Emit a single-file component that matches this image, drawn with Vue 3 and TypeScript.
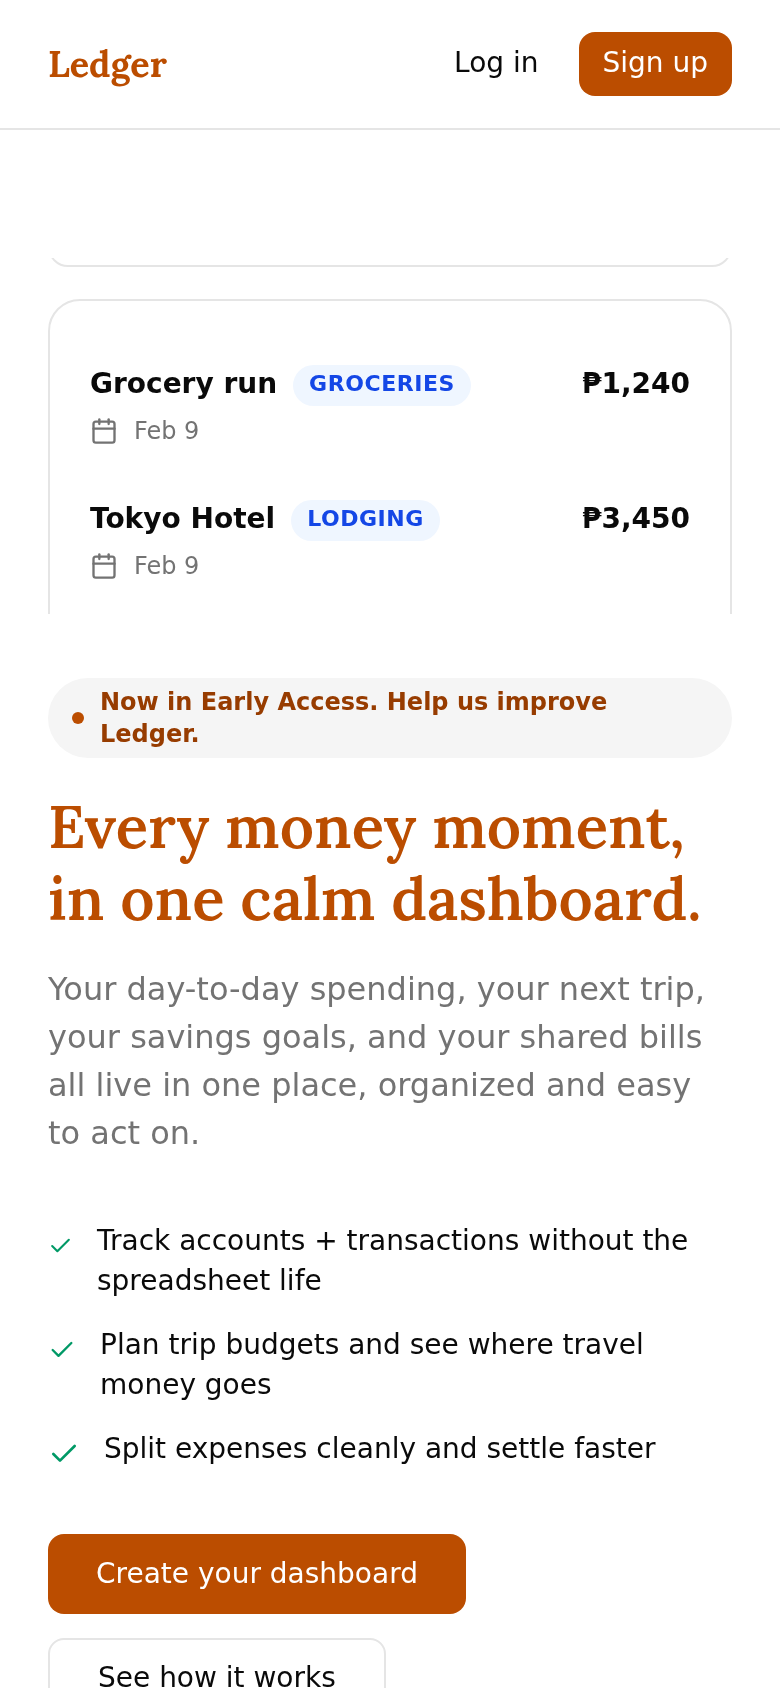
<script setup lang="ts">
type Expense = { title: string; tag: string; amount: string; date: string };

const expenses: Expense[] = [
  { title: "Grocery run", tag: "GROCERIES", amount: "₱1,240", date: "Feb 9" },
  { title: "Tokyo Hotel", tag: "LODGING", amount: "₱3,450", date: "Feb 9" },
];

const perks: { text: string; width: number }[] = [
  { text: "Track accounts + transactions without the spreadsheet life", width: 25 },
  { text: "Plan trip budgets and see where travel money goes", width: 28 },
  { text: "Split expenses cleanly and settle faster", width: 32 },
];
</script>

<template>
  <div class="page">
    <header class="topbar">
      <span class="logo">Ledger</span>
      <nav class="actions">
        <a class="login">Log in</a>
        <a class="signup">Sign up</a>
      </nav>
    </header>

    <section class="preview">
      <div class="card-tail"><div class="card-end" /></div>
      <div class="card">
        <div v-for="item in expenses" :key="item.title" class="expense">
          <div class="expense-top">
            <span class="expense-title">{{ item.title }}</span>
            <span class="tag">{{ item.tag }}</span>
            <span class="amount">{{ item.amount }}</span>
          </div>
          <div class="expense-date">
            <svg width="28" height="28" viewBox="0 0 24 24" fill="none" stroke="currentColor" stroke-width="2" stroke-linecap="round" stroke-linejoin="round">
              <path d="M8 2v4" />
              <path d="M16 2v4" />
              <rect x="3" y="4" width="18" height="18" rx="2" />
              <path d="M3 10h18" />
            </svg>
            <span>{{ item.date }}</span>
          </div>
        </div>
      </div>
    </section>

    <main class="hero">
      <div class="notice">
        <span class="notice-dot" />
        <span>Now in Early Access. Help us improve Ledger.</span>
      </div>
      <h1>Every money moment,<br />in one calm dashboard.</h1>
      <p class="lead">
        Your day-to-day spending, your next trip, your savings goals, and your shared bills all live in one place, organized and easy to act on.
      </p>
      <ul class="perks">
        <li v-for="perk in perks" :key="perk.text">
          <svg :width="perk.width" height="32" viewBox="0 0 24 24" fill="none" stroke="#009966" stroke-width="2" stroke-linecap="round" stroke-linejoin="round">
            <path d="M20 6 9 17l-5-5" />
          </svg>
          <span>{{ perk.text }}</span>
        </li>
      </ul>
      <div class="cta">
        <a class="btn-primary">Create your dashboard</a>
        <a class="btn-secondary">See how it works</a>
      </div>
    </main>
  </div>
</template>

<style>
html,
body {
  margin: 0;
  background: #fff;
}
</style>

<style scoped>
.page {
  height: 1688px;
  overflow: hidden;
  font-family: "DejaVu Sans", sans-serif;
  color: #0a0a0a;
  will-change: transform;
}
.topbar {
  display: flex;
  align-items: center;
  justify-content: space-between;
  height: 128px;
  padding: 0 48px;
  border-bottom: 2px solid #e5e5e5;
}
.logo {
  font-family: "Lora", "Liberation Serif", serif;
  font-size: 36px;
  font-weight: 700;
  color: #bb4d00;
}
.actions {
  display: flex;
  align-items: center;
  gap: 24px;
}
.login {
  padding: 0 16px 2px;
  font-size: 28px;
  line-height: 40px;
}
.signup {
  display: flex;
  align-items: center;
  height: 64px;
  box-sizing: border-box;
  padding: 0 24px 2px;
  border-radius: 16px;
  background: #bb4d00;
  color: #fff;
  font-size: 28px;
  line-height: 40px;
}
.preview {
  height: 484px;
  padding: 128px 48px 0;
  box-sizing: border-box;
  overflow: hidden;
}
.card-tail {
  height: 9px;
  overflow: hidden;
}
.card-end {
  height: 40px;
  margin-top: -31px;
  border: 2px solid #e5e5e5;
  border-radius: 32px;
  box-sizing: border-box;
}
.card {
  margin-top: 32px;
  padding: 62px 40px 136px;
  border: 2px solid #e5e5e5;
  border-radius: 32px;
}
.expense + .expense {
  margin-top: 49px;
}
.expense-top {
  display: flex;
  align-items: flex-start;
  gap: 16px;
}
.expense-title,
.amount {
  font-size: 28px;
  line-height: 42px;
  font-weight: 700;
}
.amount {
  margin-left: auto;
}
.tag {
  margin-top: 2px;
  padding: 3px 16px 6px;
  border-radius: 999px;
  background: #eff6ff;
  color: #1447e6;
  font-size: 22px;
  line-height: 32px;
  font-weight: 700;
  letter-spacing: 0.55px;
}
.expense-date {
  display: flex;
  align-items: center;
  gap: 16px;
  height: 36px;
  margin-top: 7px;
  color: #737373;
  font-size: 24px;
}
.hero {
  padding: 64px 48px 0;
}
.notice {
  display: flex;
  align-items: center;
  gap: 16px;
  padding: 8px 24px;
  border-radius: 40px;
  background: #f5f5f5;
  color: #973c00;
  font-size: 24px;
  font-weight: 700;
  line-height: 32px;
}
.notice-dot {
  flex: none;
  width: 12px;
  height: 12px;
  border-radius: 50%;
  background: #bb4d00;
}
h1 {
  margin: 32px 0 0;
  font-family: "Lora", "Liberation Serif", serif;
  font-size: 60px;
  font-weight: 600;
  line-height: 72px;
  color: #bb4d00;
}
.lead {
  margin: 31px 0 0;
  font-size: 32px;
  line-height: 48px;
  color: #737373;
}
.perks {
  display: flex;
  flex-direction: column;
  gap: 24px;
  margin: 64px 0 0;
  padding: 0;
  list-style: none;
  font-size: 28px;
  line-height: 40px;
}
.perks li {
  display: flex;
  align-items: flex-start;
  gap: 24px;
}
.perks svg {
  flex: none;
  margin-top: 9px;
}
.cta {
  display: flex;
  flex-direction: column;
  align-items: flex-start;
  gap: 24px;
  margin-top: 64px;
}
.btn-primary,
.btn-secondary {
  display: flex;
  align-items: center;
  height: 80px;
  box-sizing: border-box;
  padding: 0 48px 2px;
  border-radius: 16px;
  font-size: 28px;
}
.btn-primary {
  background: #bb4d00;
  color: #fff;
}
.btn-secondary {
  border: 2px solid #e5e5e5;
}
</style>
